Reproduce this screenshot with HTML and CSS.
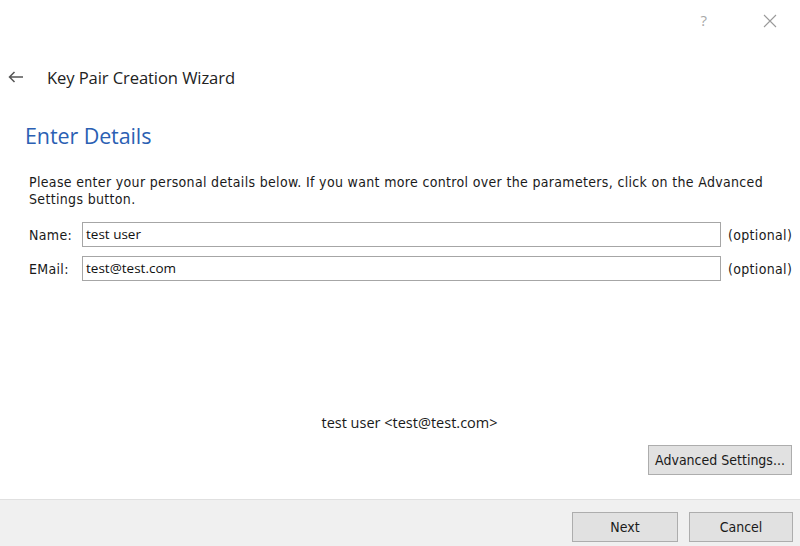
FILE: index.html
```html
<!DOCTYPE html>
<html>
<head>
<meta charset="utf-8">
<link rel="stylesheet" href="styles.css">
</head>
<body>
<div class="window">
  <div class="titlebar">
    <span class="help">?</span>
    <svg class="close" width="14" height="14" viewBox="0 0 14 14"><path d="M1 1L13 13M13 1L1 13" stroke="#9a9a9a" stroke-width="1.1" fill="none"/></svg>
  </div>
  <div class="header">
    <svg class="back" width="16" height="12" viewBox="0 0 16 12"><path d="M15 6H1.5M6.5 1L1.5 6L6.5 11" stroke="#555" stroke-width="1.5" fill="none"/></svg>
    <span class="wizard-title">Key Pair Creation Wizard</span>
  </div>
  <h1 class="page-title">Enter Details</h1>
  <div class="content">
    <p class="intro">Please enter your personal details below. If you want more control over the parameters, click on the Advanced Settings button.</p>
    <div class="form">
      <label class="label">Name:</label>
      <div class="input">test user</div>
      <span class="hint">(optional)</span>
      <label class="label">EMail:</label>
      <div class="input">test@test.com</div>
      <span class="hint">(optional)</span>
    </div>
    <div class="spacer"></div>
    <div class="summary">test user &lt;test@test.com&gt;</div>
    <div class="adv-row"><button class="btn adv">Advanced Settings...</button></div>
  </div>
  <div class="footer">
    <button class="btn next">Next</button>
    <button class="btn cancel">Cancel</button>
  </div>
</div>
</body>
</html>
```
FILE: styles.css
```css
html, body {
  margin: 0;
  padding: 0;
  background: #ffffff;
}
.window {
  width: 800px;
  height: 546px;
  display: flex;
  flex-direction: column;
  overflow: hidden;
}
.titlebar {
  height: 42px;
  display: flex;
  align-items: center;
  justify-content: flex-end;
  padding-right: 23px;
  gap: 56px;
}
.help {
  font-family: "Open Sans", sans-serif;
  font-size: 15px;
  color: #a8a8a8;
  margin-top: -3px;
}
.close {
  display: block;
}
.header {
  height: 70px;
  display: flex;
  align-items: center;
  padding-left: 8px;
}
.back {
  display: block;
}
.wizard-title {
  margin-left: 23px;
  font-family: "Open Sans", sans-serif;
  font-size: 16.6px;
  letter-spacing: -0.1px;
  color: #222;
}
.page-title {
  margin: 0;
  padding-left: 25px;
  height: 48px;
  line-height: 48px;
  font-family: "Open Sans", sans-serif;
  font-weight: 400;
  font-size: 21.5px;
  letter-spacing: -0.1px;
  color: #2b5fb3;
}
.content {
  flex: 1;
  display: flex;
  flex-direction: column;
  padding: 0 4px 0 29px;
  font-family: "DejaVu Sans Condensed", "DejaVu Sans", sans-serif;
  font-size: 14px;
  letter-spacing: 0.33px;
  color: #1a1a1a;
}
.intro {
  margin: 14px 0 0 0;
  line-height: 17px;
  padding-right: 10px;
}
.form {
  margin-top: 14px;
  display: grid;
  grid-template-columns: 53px 639px auto;
  row-gap: 9px;
  align-items: center;
}
.label {
  white-space: nowrap;
}
.input {
  box-sizing: border-box;
  height: 25px;
  border: 1px solid #a6a6a6;
  padding: 2px 3px;
  line-height: 19px;
  font-family: "Open Sans", sans-serif;
  font-size: 13.5px;
  letter-spacing: 0;
  color: #111;
}
.hint {
  margin-left: 7px;
  white-space: nowrap;
}
.spacer {
  flex: 1;
}
.summary {
  text-align: center;
  margin-left: -29px;
  margin-right: -4px;
  padding-left: 19px;
  line-height: 18px;
  font-family: "Open Sans", sans-serif;
  font-size: 14.5px;
  letter-spacing: 0;
}
.adv-row {
  display: flex;
  justify-content: flex-end;
  margin-top: 13px;
  margin-bottom: 24px;
  padding-right: 4px;
}
.btn {
  box-sizing: border-box;
  height: 30px;
  background: #e1e1e1;
  border: 1px solid #adadad;
  font-family: "DejaVu Sans Condensed", "DejaVu Sans", sans-serif;
  font-size: 14px;
  color: #1a1a1a;
  padding: 0;
  margin: 0;
}
.adv {
  width: 144px;
}
.footer {
  height: 47px;
  box-sizing: border-box;
  border-top: 1px solid #e0e0e0;
  background: #f0f0f0;
  display: flex;
  justify-content: flex-end;
  align-items: flex-start;
  padding-top: 12px;
  padding-right: 7px;
  gap: 11px;
}
.next {
  width: 106px;
}
.cancel {
  width: 104px;
}
```
